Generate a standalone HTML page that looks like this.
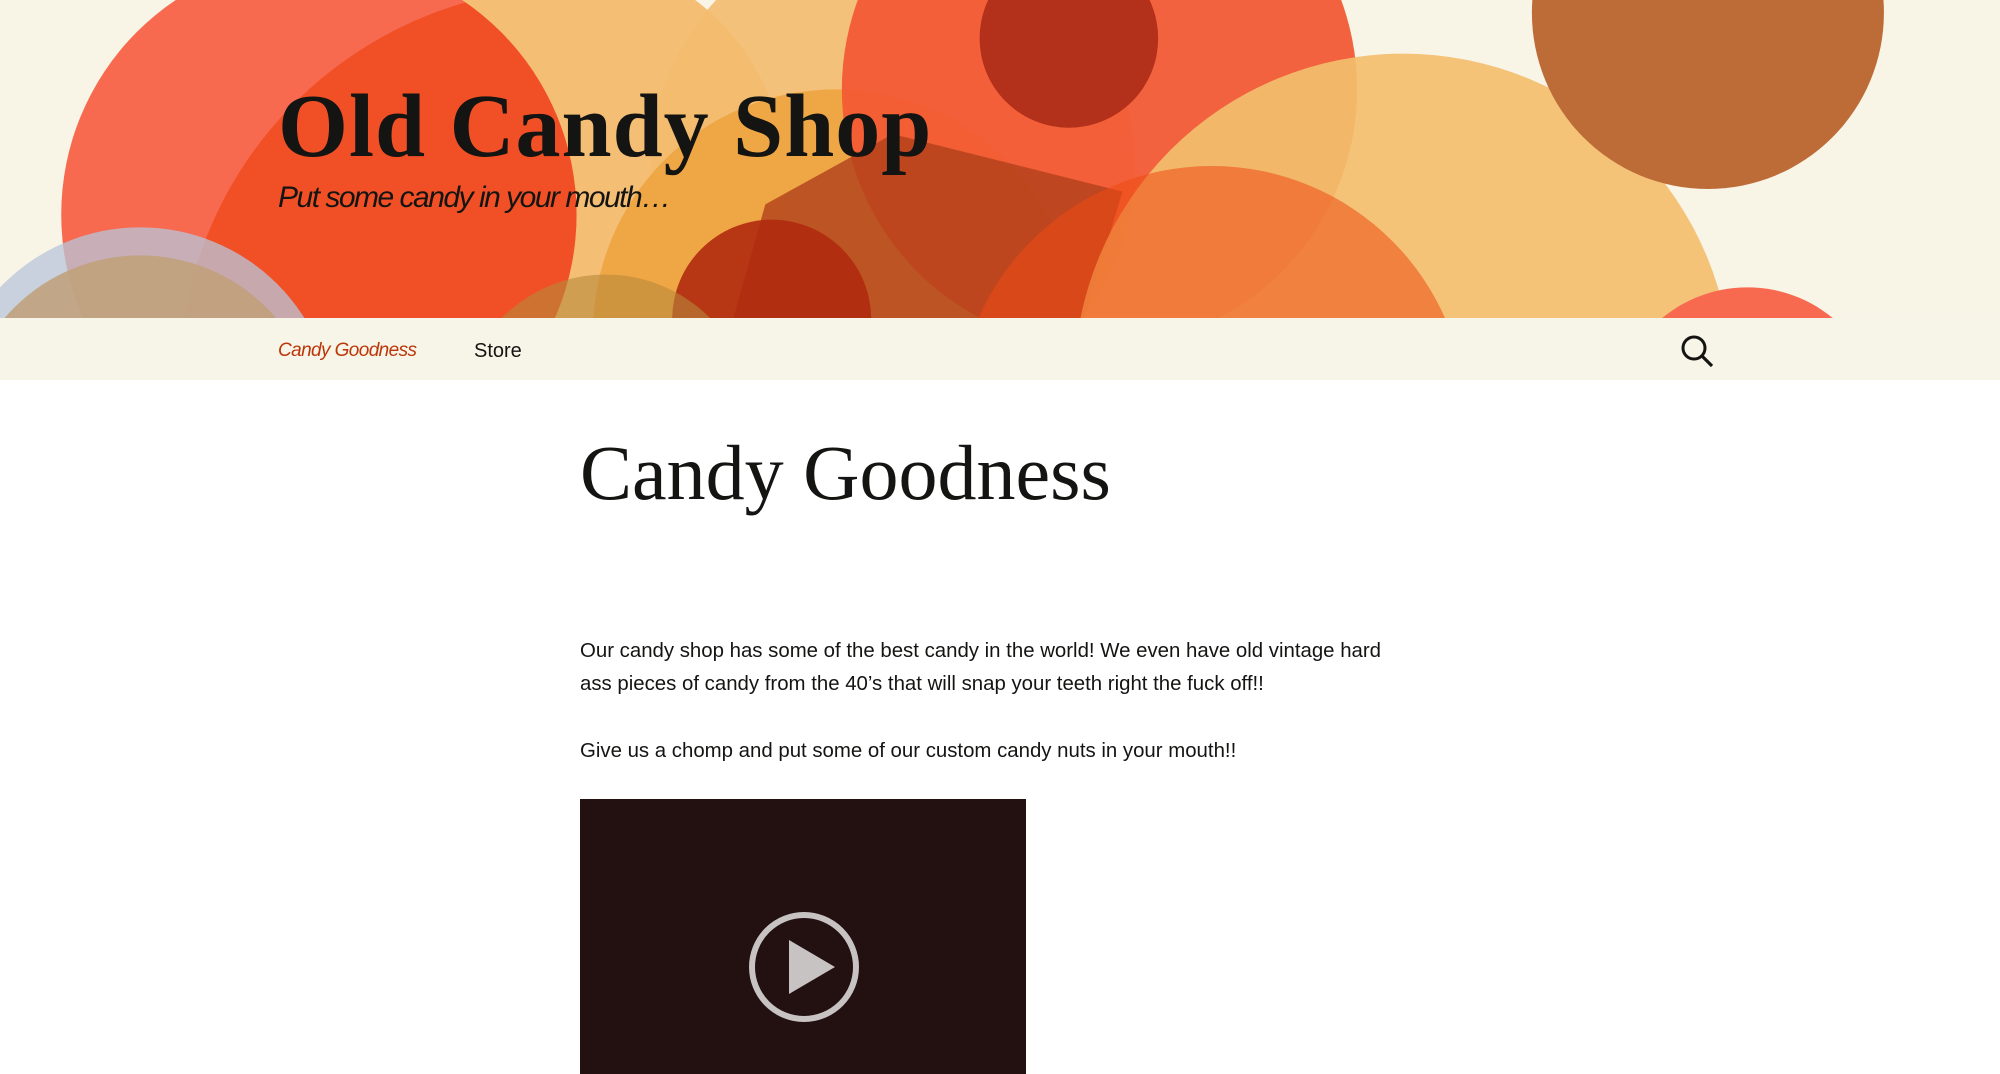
<!DOCTYPE html>
<html><head><meta charset="utf-8"><style>
*{margin:0;padding:0;box-sizing:border-box}
body{width:2000px;height:1073px;overflow:hidden;background:#fff;font-family:"Liberation Sans",sans-serif;position:relative}
#hdr{position:absolute;left:0;top:0;width:2000px;height:318px;background:#f8f4e6}
#hdr svg{position:absolute;left:0;top:0}
.title{position:absolute;left:278px;top:82px;font-family:"Liberation Serif",serif;font-weight:bold;font-size:90px;color:#141412;letter-spacing:1px;line-height:1}
.tag{position:absolute;left:278px;top:181px;font-family:"Liberation Sans",sans-serif;font-style:italic;font-size:30px;color:#141412;letter-spacing:-1.5px}
#nav{position:absolute;left:0;top:318px;width:2000px;height:62px;background:#f7f5e7}
#nav a{position:absolute;top:22px;font-size:20px;color:#141412;text-decoration:none}
h1{position:absolute;left:580px;top:434px;font-family:"Liberation Serif",serif;font-weight:normal;font-size:78px;color:#141412;line-height:1}
p{position:absolute;left:580px;width:830px;font-size:20.4px;line-height:33px;color:#141412}
#vid{position:absolute;left:580px;top:799px;width:446px;height:275px;background:#231011}
</style></head><body>
<div id="hdr">
<svg width="2000" height="318" viewBox="0 0 1568 249" preserveAspectRatio="none">
<rect width="1568" height="249" fill="#f8f4e6"/>
<circle cx="440" cy="140" r="175" fill="#f3bb6e" opacity=".95"/>
<circle cx="700" cy="130" r="190" fill="#f3bb6e" opacity=".9"/>
<circle cx="250" cy="168" r="202" fill="#f86a50"/>
<clipPath id="c1"><circle cx="250" cy="168" r="202"/></clipPath>
<circle cx="450" cy="300" r="310" fill="#ef4a1c" opacity=".8" clip-path="url(#c1)"/>
<circle cx="655" cy="260" r="190" fill="#eea03a" opacity=".8"/>
<circle cx="862" cy="70" r="202" fill="#f25a35" opacity=".95"/>
<circle cx="838" cy="30" r="70" fill="#b3301a"/>
<polygon points="600,160 700,105 880,150 850,249 575,249" fill="#b0401a" opacity=".8"/>
<circle cx="1100" cy="300" r="258" fill="#f3be6e" opacity=".92"/>
<circle cx="950" cy="330" r="200" fill="#ec4a12" opacity=".55"/>
<circle cx="1339" cy="10" r="138" fill="#bd6c38"/>
<circle cx="605" cy="250" r="78" fill="#b02a10" opacity=".9"/>
<circle cx="475" cy="330" r="115" fill="#b8883a" opacity=".6"/>
<circle cx="110" cy="330" r="152" fill="#b8c6da" opacity=".75"/>
<circle cx="110" cy="340" r="140" fill="#c0a078" opacity=".85"/>
<circle cx="1370" cy="330" r="105" fill="#f86a50"/>
</svg>
<div class="title">Old Candy Shop</div>
<div class="tag">Put some candy in your mouth…</div>
</div>
<div id="nav">
<a style="left:278px;color:#bc360a;font-style:italic;font-size:19px;letter-spacing:-0.6px">Candy Goodness</a>
<a style="left:474px">Store</a>
<svg style="position:absolute;left:1680px;top:16px" width="34" height="34" viewBox="0 0 34 34"><circle cx="14" cy="14" r="11" fill="none" stroke="#141412" stroke-width="3"/><line x1="22" y1="22" x2="32" y2="32" stroke="#141412" stroke-width="3.2"/></svg>
</div>
<h1>Candy Goodness</h1>
<p style="top:635px">Our candy shop has some of the best candy in the world! We even have old vintage hard ass pieces of candy from the 40’s that will snap your teeth right the fuck off!!</p>
<p style="top:735px">Give us a chomp and put some of our custom candy nuts in your mouth!!</p>
<div id="vid"><svg style="position:absolute;left:167px;top:111px" width="114" height="114" viewBox="0 0 114 114"><circle cx="57" cy="57" r="52" fill="none" stroke="#c8c3c3" stroke-width="6"/><polygon points="42,30 42,84 88,57" fill="#c8c3c3"/></svg></div>
</body></html>
